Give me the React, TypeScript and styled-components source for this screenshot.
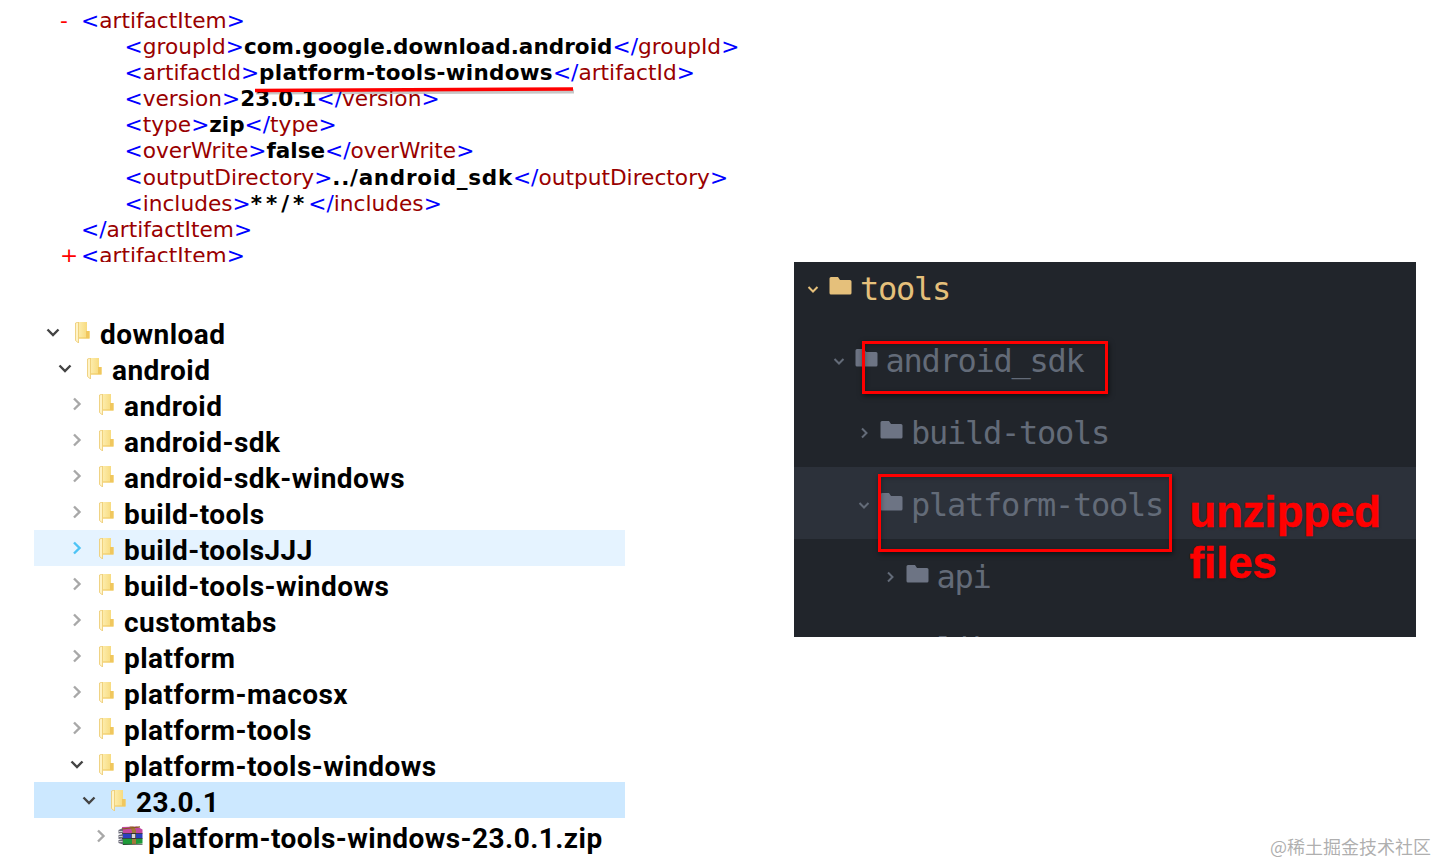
import React from "react";
import styled, { createGlobalStyle } from "styled-components";

const Global = createGlobalStyle`
  html, body { margin: 0; padding: 0; background: #fff; }
`;

const Page = styled.div`
  position: relative;
  width: 1437px;
  height: 864px;
  overflow: hidden;
  display: grid;
  grid-template-columns: 794px 622px;
  background: #fff;
`;
const LeftColumn = styled.div`
  display: flex;
  flex-direction: column;
`;

/* XML */
const XmlPanel = styled.div`
  position: relative;
  height: 262px;
  overflow: hidden;
  padding-top: 8px;
  box-sizing: border-box;
  font-family: "DejaVu Sans", Verdana, sans-serif;
  font-size: 21.7px;
  line-height: 26.1px;
  white-space: nowrap;
`;
const XmlRow = styled.div<{ $nested?: boolean }>`
  display: flex;
  height: 26.1px;
  padding-left: ${(p) => (p.$nested ? 124.5 : 60)}px;
`;
const Marker = styled.span`
  width: 21px;
  color: #ff0000;
`;
const Bracket = styled.span`
  color: #0000ff;
`;
const TagName = styled.span`
  color: #990000;
`;
const Value = styled.span<{ $track: number }>`
  color: #000;
  font-weight: 700;
  font-size: 21.5px;
  letter-spacing: ${(p) => p.$track}px;
`;
const Underline = styled.svg`
  position: absolute;
  left: 250px;
  top: 84px;
  width: 330px;
  height: 14px;
`;

function Tag({ name, close }: { name: string; close?: boolean }) {
  return (
    <>
      <Bracket>{close ? "</" : "<"}</Bracket>
      <TagName>{name}</TagName>
      <Bracket>&gt;</Bracket>
    </>
  );
}

const xmlFields: [string, string, number][] = [
  ["groupId", "com.google.download.android", 0.04],
  ["artifactId", "platform-tools-windows", 0.27],
  ["version", "23.0.1", 0],
  ["type", "zip", 0],
  ["overWrite", "false", 0],
  ["outputDirectory", "../android_sdk", 0.7],
  ["includes", "**/*", 4],
];

/* Explorer tree */
const Tree = styled.div`
  margin: 52px 0 0 34px;
  width: 591px;
  font-family: Roboto, "Open Sans", sans-serif;
  font-weight: 700;
  font-size: 28px;
  letter-spacing: 0.45px;
  color: #000;
`;
const TreeRow = styled.div<{ $level: number; $state?: "hover" | "selected" }>`
  display: flex;
  align-items: center;
  height: 36px;
  padding-left: ${(p) => 12 + p.$level * 12}px;
  background: ${(p) =>
    p.$state === "selected" ? "#cce8ff" : p.$state === "hover" ? "#e5f3ff" : "transparent"};
`;
const TreeChevron = styled.svg`
  width: 14px;
  height: 14px;
  flex: none;
  margin-top: -1px;
`;
const TreeIconSlot = styled.span`
  width: 40px;
  flex: none;
  display: flex;
  padding-left: 15px;
  box-sizing: border-box;
`;
const ZipSlot = styled(TreeIconSlot)`
  padding-left: 10px;
`;
const TreeLabel = styled.span`
  line-height: 36px;
  margin-top: 6px;
  white-space: nowrap;
`;

function Chevron({ open, color }: { open: boolean; color: string }) {
  return (
    <TreeChevron viewBox="0 0 14 14">
      <path
        d={open ? "M1.5 4.5 L7 10 L12.5 4.5" : "M4 1.5 L9.5 7 L4 12.5"}
        fill="none"
        stroke={color}
        strokeWidth="2.4"
      />
    </TreeChevron>
  );
}

function YellowFolder() {
  return (
    <svg width="15" height="21" viewBox="0 0 15 21">
      <defs>
        <linearGradient id="folderFace" x1="0" y1="0" x2="1" y2="0">
          <stop offset="0" stopColor="#fdeeb0" />
          <stop offset="1" stopColor="#f6d672" />
        </linearGradient>
      </defs>
      <path d="M3 0 H12 V9 L14.5 9 V16.5 H3 Z" fill="url(#folderFace)" />
      <path d="M11 9 H14.5 V16.5 H4 L4 15.5 H11 Z" fill="#f0c75e" />
      <path d="M0.5 1 L3.5 0 V17 L3.5 21 L0.5 18.5 Z" fill="#fff3c6" stroke="#ecc96c" strokeWidth="0.8" />
    </svg>
  );
}

function ArchiveIcon() {
  return (
    <svg width="25" height="20" viewBox="0 0 25 20">
      <path d="M4 1 L19 0.5 L24.5 3.5 V7.5 L5 7.5 Z" fill="#c2479f" />
      <path d="M4 7.5 H24.5 V12.5 H4 Z" fill="#2a3fc0" />
      <path d="M4 12.5 H24.5 V17.5 L5 19 Z" fill="#1f9a3a" />
      <path d="M0.5 4 L5 2 V7 L0.5 7.5 Z M0.5 9 L5 8 V12.5 L0.5 13 Z M0.5 14 L5 13 V18.5 L0.5 17 Z" fill="#6a6a78" />
      <path d="M1 5.5 H4.5 M1 10.5 H4.5 M1 15.5 H4.5" stroke="#e8e8e8" strokeWidth="0.8" />
      <path d="M11.5 0.5 H15.5 L18 4 V18 H14 V5 Z" fill="#a3783a" />
      <path d="M4 3 L22 0.8" stroke="#8a5a20" strokeWidth="1.2" />
      <rect x="13.5" y="7.5" width="4" height="5" fill="#d8d8d8" stroke="#333" strokeWidth="0.6" />
      <path d="M4 7.5 H24.5 M4 12.5 H24.5 M5 18.4 H24.5" stroke="#222" strokeWidth="0.7" />
    </svg>
  );
}

const treeItems: { label: string; level: number; open?: boolean; state?: "hover" | "selected"; zip?: boolean }[] = [
  { label: "download", level: 0, open: true },
  { label: "android", level: 1, open: true },
  { label: "android", level: 2 },
  { label: "android-sdk", level: 2 },
  { label: "android-sdk-windows", level: 2 },
  { label: "build-tools", level: 2 },
  { label: "build-toolsJJJ", level: 2, state: "hover" },
  { label: "build-tools-windows", level: 2 },
  { label: "customtabs", level: 2 },
  { label: "platform", level: 2 },
  { label: "platform-macosx", level: 2 },
  { label: "platform-tools", level: 2 },
  { label: "platform-tools-windows", level: 2, open: true },
  { label: "23.0.1", level: 3, open: true, state: "selected" },
  { label: "platform-tools-windows-23.0.1.zip", level: 4, zip: true },
];

/* Dark editor sidebar */
const DarkPanel = styled.div`
  position: relative;
  margin-top: 262px;
  height: 375px;
  background: #21252b;
  overflow: hidden;
  font-family: "DejaVu Sans Mono", monospace;
  font-size: 32px;
  letter-spacing: -1.27px;
  color: #636b78;
`;
const DarkList = styled.div`
  margin-top: -11px;
`;
const DarkRow = styled.div<{ $level: number; $active?: boolean; $accent?: boolean }>`
  display: flex;
  align-items: center;
  height: 72px;
  padding-left: ${(p) => 12 + p.$level * 25.5}px;
  background: ${(p) => (p.$active ? "#2c313a" : "transparent")};
  color: ${(p) => (p.$accent ? "#e5c07b" : "#636b78")};
`;
const DarkChevron = styled.svg`
  width: 14px;
  height: 14px;
  flex: none;
  margin: 4px 9px 0 0;
`;
const DarkFolder = styled.svg`
  width: 23px;
  height: 20px;
  flex: none;
  margin-right: 8px;
  margin-top: -2px;
`;
const DarkLabel = styled.span`
  margin-top: 4px;
  white-space: nowrap;
`;
const Box = styled.div<{ $left: number; $top: number; $w: number; $h: number }>`
  position: absolute;
  left: ${(p) => p.$left}px;
  top: ${(p) => p.$top}px;
  width: ${(p) => p.$w}px;
  height: ${(p) => p.$h}px;
  box-sizing: border-box;
  border: 3px solid #ff0000;
  box-shadow: 1px 2px 5px rgba(0, 0, 0, 0.55), inset 1px 1px 4px rgba(0, 0, 0, 0.25);
`;
const Note = styled.div`
  position: absolute;
  left: 395.5px;
  top: 225px;
  font-family: "Liberation Sans", Arial, sans-serif;
  font-weight: 700;
  font-size: 43.6px;
  line-height: 51px;
  letter-spacing: 0;
  color: #ff0000;
  -webkit-text-stroke: 0.5px #ff0000;
  text-shadow: 1px 1px 3px rgba(0, 0, 0, 0.25);
`;
const Watermark = styled.div`
  position: absolute;
  right: 6px;
  bottom: 6px;
  font-family: "Noto Sans CJK SC", "DejaVu Sans", sans-serif;
  font-size: 18px;
  line-height: 24px;
  color: rgba(140, 140, 140, 0.7);
`;

const darkItems: { label: string; level: number; open: boolean; accent?: boolean; active?: boolean }[] = [
  { label: "tools", level: 0, open: true, accent: true },
  { label: "android_sdk", level: 1, open: true },
  { label: "build-tools", level: 2, open: false },
  { label: "platform-tools", level: 2, open: true, active: true },
  { label: "api", level: 3, open: false },
  { label: "libs", level: 3, open: false },
];

export default function App() {
  return (
    <Page>
      <Global />
      <LeftColumn>
        <XmlPanel>
          <XmlRow>
            <Marker>-</Marker>
            <span><Tag name="artifactItem" /></span>
          </XmlRow>
          {xmlFields.map(([name, value, track]) => (
            <XmlRow $nested key={name}>
              <span>
                <Tag name={name} />
                <Value $track={track}>{value}</Value>
                <Tag name={name} close />
              </span>
            </XmlRow>
          ))}
          <XmlRow>
            <Marker />
            <span><Tag name="artifactItem" close /></span>
          </XmlRow>
          <XmlRow>
            <Marker>+</Marker>
            <span><Tag name="artifactItem" /></span>
          </XmlRow>
          <Underline viewBox="0 0 330 14">
            <path d="M6 8.5 L324 7.5" stroke="rgba(0,0,0,0.22)" strokeWidth="4" />
            <path d="M5 6.5 L323 5" stroke="#ff0000" strokeWidth="3.6" />
          </Underline>
        </XmlPanel>
        <Tree>
          {treeItems.map((it, i) => (
            <TreeRow key={i} $level={it.level} $state={it.state}>
              <Chevron
                open={!!it.open}
                color={it.state === "hover" ? "#4dc3f5" : it.open ? "#444" : "#a8a8a8"}
              />
              {it.zip ? (
                <ZipSlot><ArchiveIcon /></ZipSlot>
              ) : (
                <TreeIconSlot><YellowFolder /></TreeIconSlot>
              )}
              <TreeLabel>{it.label}</TreeLabel>
            </TreeRow>
          ))}
        </Tree>
      </LeftColumn>
      <DarkPanel>
        <DarkList>
          {darkItems.map((it) => (
            <DarkRow key={it.label} $level={it.level} $active={it.active} $accent={it.accent}>
              <DarkChevron viewBox="0 0 14 14">
                <path
                  d={it.open ? "M2.5 5 L7 9.5 L11.5 5" : "M5 2.5 L9.5 7 L5 11.5"}
                  fill="none"
                  stroke={it.accent ? "#e5c07b" : "#636b78"}
                  strokeWidth="2"
                />
              </DarkChevron>
              <DarkFolder viewBox="0 0 23 20">
                <path
                  d="M2 1 H9 L11 4 H21 A1.5 1.5 0 0 1 22.5 5.5 V17 A1.5 1.5 0 0 1 21 18.5 H2 A1.5 1.5 0 0 1 0.5 17 V2.5 A1.5 1.5 0 0 1 2 1 Z"
                  fill={it.accent ? "#e5c07b" : "#6d7484"}
                />
              </DarkFolder>
              <DarkLabel>{it.label}</DarkLabel>
            </DarkRow>
          ))}
        </DarkList>
        <Box $left={68} $top={79} $w={246} $h={53} />
        <Box $left={84} $top={212} $w={294} $h={78} />
        <Note>unzipped<br />files</Note>
      </DarkPanel>
      <Watermark>@稀土掘金技术社区</Watermark>
    </Page>
  );
}
